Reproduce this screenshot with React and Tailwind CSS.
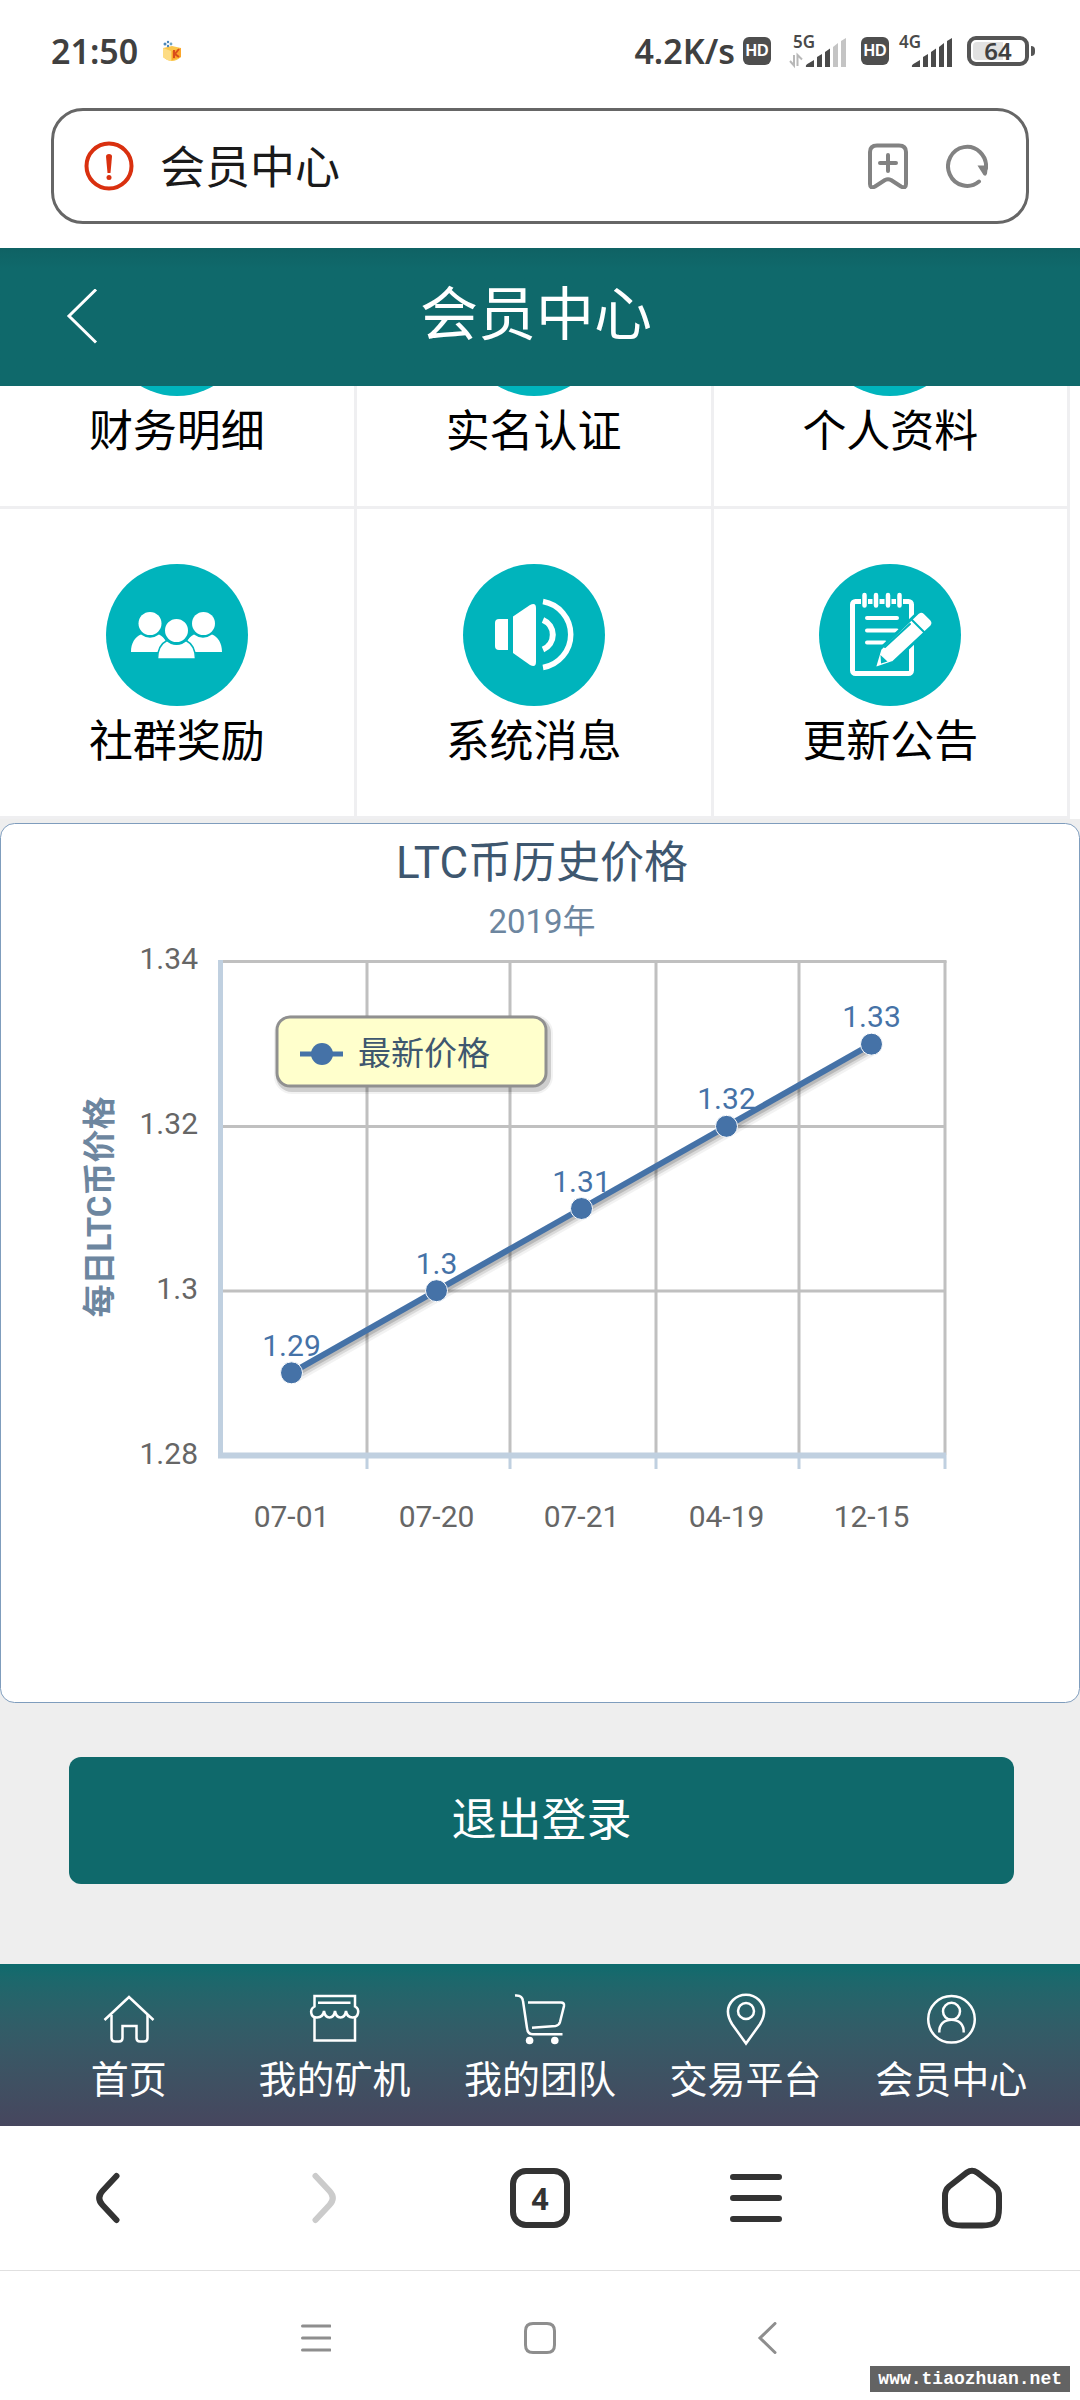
import React from "react";

const TEAL = "#00b4bc";

const prices = [
  { date: "07-01", value: 1.29 },
  { date: "07-20", value: 1.3 },
  { date: "07-21", value: 1.31 },
  { date: "04-19", value: 1.32 },
  { date: "12-15", value: 1.33 },
];

// plot area inside the 1080x880 chart
const PLOT = { left: 219, right: 944, top: 139, bottom: 632 };

function pointX(i) {
  return PLOT.left + ((PLOT.right - PLOT.left) / prices.length) * (i + 0.5);
}

function pointY(value) {
  return PLOT.bottom - ((value - 1.28) / 0.06) * (PLOT.bottom - PLOT.top);
}

function PeopleIcon() {
  return (
    <svg viewBox="0 0 142 142" className="size-full" fill="#fff">
      <path d="M25 88C25 79 29 73 35 70.5Q44 77 53 70.5C59 73 62 80 63 88Z" />
      <path d="M116 88C116 79 112 73 106 70.5Q97 77 88 70.5C82 73 79 80 78 88Z" />
      <path d="M51.500 95C51.500 85 56 79 61 76.500Q70.500 83 80 76.500C85 79 89.500 85 89.500 95Z" stroke={TEAL} strokeWidth="1.500" />
      <circle cx="44" cy="59.500" r="11.500" />
      <circle cx="97.500" cy="59.500" r="11.500" />
      <circle cx="70.500" cy="66.500" r="13" stroke={TEAL} strokeWidth="3" />
    </svg>
  );
}

function SpeakerIcon() {
  return (
    <svg viewBox="0 0 142 142" className="size-full" fill="#fff">
      <path d="M45 55V86H36Q32 86 32 82V59Q32 55 36 55Z" />
      <path d="M50 52.500L67 41Q73 38 73 44V98Q73 104 67 101L50 89Z" />
      <path d="M80 56A16 16 0 0 1 80 85.500" fill="none" stroke="#fff" strokeWidth="6" />
      <path d="M80 37.500A33.500 33.500 0 0 1 80 103.500" fill="none" stroke="#fff" strokeWidth="5.500" />
    </svg>
  );
}

function NotepadIcon() {
  return (
    <svg viewBox="0 0 142 142" className="size-full" fill="none" stroke="#fff" strokeLinecap="round">
      <rect x="33.500" y="37.500" width="59" height="72" rx="3" strokeWidth="5" />
      <path d="M45.500 34V41M57 34V41M69 34V41M80.500 34V41" stroke={TEAL} strokeWidth="7" />
      <path d="M45.500 31V41.500M57 31V41.500M69 31V41.500M80.500 31V41.500" strokeWidth="4.500" />
      <path d="M48 54H78M48 66.500H78M48 78.500H66" strokeWidth="4" />
      <path d="M55 105L61 85L99 48.500Q102.500 45.500 106 49L112.500 55.500Q115.500 59 112.500 62.500L74 98.500Z" fill="#fff" stroke={TEAL} strokeWidth="3" strokeLinejoin="round" />
      <path d="M93 56L106 69M66 83L91 60" stroke={TEAL} strokeWidth="2" />
      <path d="M61.500 91L68.500 97.500L62 99.500Z" fill={TEAL} stroke="none" />
    </svg>
  );
}

const menu = [
  { label: "财务明细" },
  { label: "实名认证" },
  { label: "个人资料" },
  { label: "社群奖励", icon: <PeopleIcon /> },
  { label: "系统消息", icon: <SpeakerIcon /> },
  { label: "更新公告", icon: <NotepadIcon /> },
];

const tabs = [
  {
    label: "首页",
    icon: (
      <>
        <path d="M1.500 26L26 3L50.500 26" />
        <path d="M8.500 21V44Q8.500 47.500 12 47.500H16Q19.500 47.500 19.500 44V32H33.500V44Q33.500 47.500 37 47.500H41Q44.500 47.500 44.500 44V21" />
      </>
    ),
  },
  {
    label: "我的矿机",
    icon: (
      <>
        <path d="M6.500 12.500V2H47V12.500C52 15 51 23.500 44.500 23.500Q39 23.500 38 17Q37 23.500 32.500 23.500Q28 23.500 27 17Q26 23.500 21.500 23.500Q17 23.500 16 17Q15 23.500 9 23.500C2 23.500 1.500 15 6.500 12.500Z" />
        <path d="M10 8.700H42.500M6.500 23V46.500H47V23" />
      </>
    ),
  },
  {
    label: "我的团队",
    icon: (
      <>
        <path d="M1 1.500C6 1 8.500 3 9 7L13 34Q13.500 40.300 19 40.300H48.500" />
        <path d="M14 8.500H47Q50.500 8.500 50 12L46 28Q45 31.500 41.500 32L18 33.800" />
        <circle cx="15.600" cy="46.500" r="3.800" fill="#fff" stroke="none" />
        <circle cx="40.800" cy="46.500" r="3.800" fill="#fff" stroke="none" />
      </>
    ),
  },
  {
    label: "交易平台",
    icon: (
      <>
        <path d="M26 49.500L12 30C6 20 7 12 13 6C20-1 32-1 39 6C45 12 46 20 40 30Z" />
        <circle cx="26" cy="17" r="8" />
      </>
    ),
  },
  {
    label: "会员中心",
    icon: (
      <>
        <circle cx="26.500" cy="25.300" r="23.300" />
        <circle cx="26.500" cy="17.300" r="8.500" />
        <path d="M14.300 38.500C14 30 19.500 25.800 26.500 25.800S39 30 38.700 38.500" />
      </>
    ),
  },
];

function HdBadge() {
  return (
    <span className="flex size-7 items-center justify-center rounded-md bg-[#4e4e4e] font-['Liberation_Sans'] text-base font-bold text-white">
      HD
    </span>
  );
}

function Signal({ label, weak }) {
  const off = weak ? "#c4c4c4" : "#4a4a4a";
  return (
    <svg viewBox="0 0 60 34" className="h-[34px] w-[60px] overflow-visible" fill="#4a4a4a">
      <text x={weak ? 4 : 0} y="14" fontSize="17" fontWeight="600" fontFamily="Noto Sans">
        {label}
      </text>
      {weak && <path d="M1 27L5 31.500V21M8.500 32V21L13 25.500" fill="none" stroke="#b8b8b8" strokeWidth="2" />}
      <g transform={weak ? "translate(17 0)" : "translate(13 0)"}>
        <path d="M0 33Q-1 31 3 29L8 26V33Z" />
        <path d="M11 23L16 20V33H11Z" />
        <path d="M19 18L24 14.500V33H19Z" />
        <path d="M27 13L32 9V33H27Z" fill={off} />
        <path d="M35 7L40 4V33H35Z" fill={off} />
      </g>
    </svg>
  );
}

function StatusBar() {
  return (
    <div className="flex h-[102px] items-center justify-between pr-[45px] pl-[51px] font-['Noto_Sans'] text-[34px] font-semibold text-[#404040]">
      <div className="flex items-center gap-6">
        <span>21:50</span>
        <svg viewBox="0 0 20 22" className="h-[22px] w-5">
          <path d="M1 8L10 6L19 8V17Q10 25 1 17Z" fill="#fbc64c" />
          <path d="M1 8L9 11V21Q4 20 1 17Z" fill="#fddc84" />
          <path d="M10 11L19 8V17L10 20Z" fill="#fba62c" />
          <path d="M12 10V18M17 9L13 14L17 17" fill="none" stroke="#d94e1b" strokeWidth="2" />
          <circle cx="3" cy="4" r="1.500" fill="#4a86b8" />
          <circle cx="6" cy="2" r="1.200" fill="#4a86b8" />
          <circle cx="9" cy="4" r="1.400" fill="#72a4c4" />
          <circle cx="6" cy="6" r="1.200" fill="#4a86b8" />
        </svg>
      </div>
      <div className="flex items-center">
        <span className="mr-2">4.2K/s</span>
        <HdBadge />
        <span className="mr-3 ml-[18px]">
          <Signal label="5G" weak />
        </span>
        <HdBadge />
        <span className="mr-2 ml-[10px]">
          <Signal label="4G" />
        </span>
        <span className="flex h-[30px] w-[62px] rounded-[9px] border-4 border-[#555] p-0.5">
          <span className="flex flex-1 items-center justify-center rounded-sm bg-linear-to-r from-[#e2e2e2] from-60% to-white to-60% text-2xl leading-none">
            64
          </span>
        </span>
        <span className="ml-0.5 h-[10px] w-1 rounded-r bg-[#555]" />
      </div>
    </div>
  );
}

function AddressBar() {
  return (
    <div className="mx-[51px] mt-1.5 mb-6 flex h-[116px] items-center rounded-[32px] border-3 border-[#666] pr-[38px] pl-[30px]">
      <svg viewBox="0 0 50 50" className="size-[50px]" fill="none">
        <circle cx="25" cy="25" r="22.500" stroke="#d9300f" strokeWidth="4" />
        <path d="M22 15.500Q22 13 25 13T28 15.500L26.500 32H23.500Z" fill="#d9300f" />
        <circle cx="25" cy="36.500" r="2.500" fill="#d9300f" />
      </svg>
      <span className="ml-[26px] flex-1 pb-0.5 text-[45px] leading-[60px] text-[#1a1a1a]">会员中心</span>
      <button aria-label="收藏" className="mr-[38px]">
        <svg viewBox="0 0 40 46" className="h-[46px] w-10" fill="none" stroke="#828282" strokeWidth="4" strokeLinecap="round" strokeLinejoin="round">
          <path d="M2 9Q2 2.500 9 2.500H31Q38 2.500 38 9V41Q38 46 33 43.500L23 37Q20 35.500 17 37L7 43.500Q2 46 2 41Z" />
          <path d="M20 12V28M12 20H28" />
        </svg>
      </button>
      <button aria-label="刷新">
        <svg viewBox="0 0 42 44" className="h-11 w-[42px]" fill="none" stroke="#828282" strokeWidth="4">
          <path d="M33 37.500A19 19.500 0 1 1 40 24" strokeLinecap="round" />
          <path d="M31.500 21.500H42L41 29.500Q40 33 37.500 31Z" fill="#828282" stroke="none" />
        </svg>
      </button>
    </div>
  );
}

function PriceChart() {
  const line = prices.map((p, i) => `${pointX(i)},${pointY(p.value)}`).join(" ");
  return (
    <svg
      viewBox="0 0 1080 880"
      className="mt-1 block w-full font-[Roboto,'Noto_Sans_CJK_SC',sans-serif]"
      role="img"
      aria-label="LTC币历史价格"
    >
      <rect x=".5" y=".5" width="1079" height="879" rx="14" fill="#fff" stroke="#7f9dbd" />
      <text x="542" y="55" fontSize="44" fill="#3E576F" textAnchor="middle">LTC币历史价格</text>
      <text x="542" y="110" fontSize="33" fill="#6D869F" textAnchor="middle">2019年</text>

      {/* rejilla */}
      <g stroke="#c0c0c0" strokeWidth="3" fill="none">
        <path d="M220 138.500H946.500M220 303.500H946M220 468H946" />
        <path d="M367 138V632M510 138V632M656 138V632M799 138V632M945 138V632" />
      </g>
      <path d="M367 632V646M510 632V646M656 632V646M799 632V646M945 632V646" stroke="#c0d0e0" strokeWidth="3" />
      <path d="M220.500 137V635" stroke="#c0d0e0" strokeWidth="5" />
      <path d="M218 632.500H946" stroke="#c0d0e0" strokeWidth="6" />

      <g fontSize="30" fill="#666" textAnchor="end">
        <text x="198" y="146">1.34</text>
        <text x="198" y="311">1.32</text>
        <text x="198" y="476">1.3</text>
        <text x="198" y="641">1.28</text>
      </g>
      <g fontSize="30" fill="#666" textAnchor="middle">
        {prices.map((p, i) => (
          <text key={p.date} x={pointX(i)} y="704">{p.date}</text>
        ))}
      </g>
      <text transform="translate(111 384) rotate(-90)" fontSize="33" fontWeight="bold" fill="#6D869F" textAnchor="middle">
        每日LTC币价格
      </text>

      {/* serie */}
      <g fill="none" stroke="#000" strokeLinejoin="round" transform="translate(3 3)">
        <polyline points={line} strokeOpacity=".05" strokeWidth="14" />
        <polyline points={line} strokeOpacity=".1" strokeWidth="9" />
        <polyline points={line} strokeOpacity=".15" strokeWidth="4" />
      </g>
      <polyline points={line} fill="none" stroke="#4572A7" strokeWidth="6" />
      {prices.map((p, i) => (
        <g key={p.date}>
          <circle cx={pointX(i)} cy={pointY(p.value)} r="11" fill="#4572A7" stroke="#fff" />
          <text x={pointX(i)} y={pointY(p.value) - 17} fontSize="30" fill="#4572A7" textAnchor="middle">
            {p.value}
          </text>
        </g>
      ))}

      {/* leyenda */}
      <g fill="none" stroke="#000" transform="translate(2 3)">
        <rect x="277" y="194" width="269" height="69" rx="13" strokeOpacity=".05" strokeWidth="10" />
        <rect x="277" y="194" width="269" height="69" rx="13" strokeOpacity=".15" strokeWidth="6" />
      </g>
      <rect x="277" y="194" width="269" height="69" rx="13" fill="#ffffcc" stroke="#909090" strokeWidth="3" />
      <path d="M300 231H343" stroke="#4572A7" strokeWidth="5" />
      <circle cx="322" cy="231" r="11" fill="#4572A7" />
      <text x="358" y="242" fontSize="33" fill="#3E576F">最新价格</text>
    </svg>
  );
}

function BrowserBar() {
  return (
    <nav className="grid h-36 grid-cols-5 items-center justify-items-center bg-white text-[#333]">
      <button aria-label="后退">
        <svg viewBox="0 0 24 52" className="h-[52px] w-6" fill="none" stroke="currentColor" strokeWidth="6" strokeLinecap="round">
          <path d="M20.500 4L6.500 19Q0 26 6.500 33L20.500 48" />
        </svg>
      </button>
      <button aria-label="前进" className="text-[#cbcbcb]">
        <svg viewBox="0 0 24 52" className="h-[52px] w-6" fill="none" stroke="currentColor" strokeWidth="6" strokeLinecap="round">
          <path d="M3.500 4L17.500 19Q24 26 17.500 33L3.500 48" />
        </svg>
      </button>
      <button className="flex size-[60px] items-center justify-center rounded-2xl border-6 border-[#333] font-['Noto_Sans'] text-[30px] font-bold">
        4
      </button>
      <button aria-label="菜单">
        <svg viewBox="0 0 52 50" className="h-[50px] w-[52px]" stroke="currentColor" strokeWidth="6" strokeLinecap="round">
          <path d="M3 4H49M3 25H49M3 46H49" />
        </svg>
      </button>
      <button aria-label="主页">
        <svg viewBox="0 0 60 62" className="h-[62px] w-[60px]" fill="none" stroke="currentColor" strokeWidth="6">
          <path d="M25 5.500Q30 2 35 5.500L53 19.500Q57 23 57 29V41C57 55 53 58.500 40 58.500H20C7 58.500 3 55 3 41V29Q3 23 7 19.500Z" />
        </svg>
      </button>
    </nav>
  );
}

function SystemBar() {
  return (
    <nav className="relative flex flex-1 items-center justify-center border-t border-[#e0e0e0] bg-white pt-[51px] pb-[46px] text-[#8e8e8e]">
      <button aria-label="最近任务" className="flex w-[225px] justify-center">
        <svg viewBox="0 0 32 32" className="size-8" stroke="currentColor" strokeWidth="3" strokeLinecap="round">
          <path d="M3.500 4H31M3.500 16H31M3.500 28H31" />
        </svg>
      </button>
      <button aria-label="桌面" className="flex w-[225px] justify-center">
        <svg viewBox="0 0 32 32" className="size-8" fill="none" stroke="currentColor" strokeWidth="3">
          <path d="M1.500 9Q1.500 1.500 9 1.500H23Q30.500 1.500 30.500 9V23Q30.500 30.500 23 30.500H9Q1.500 30.500 1.500 23Z" />
        </svg>
      </button>
      <button aria-label="返回" className="flex w-[225px] justify-center">
        <svg viewBox="0 0 32 32" className="size-8" fill="none" stroke="currentColor" strokeWidth="3" strokeLinecap="round">
          <path d="M26 1.500L11 16L26 30.500" />
        </svg>
      </button>
      <span className="absolute right-[10px] bottom-2 bg-[#636363] px-2 font-['Liberation_Mono'] text-lg leading-[26px] font-bold text-white">
        www.tiaozhuan.net
      </span>
    </nav>
  );
}

export default function App() {
  return (
    <div className="flex min-h-screen flex-col bg-[#eeeeee] font-['Noto_Sans_CJK_SC',sans-serif]">
      <div className="bg-white">
        <StatusBar />
        <AddressBar />
      </div>

      <header className="flex h-[138px] items-center bg-linear-to-b from-[#0f6264] to-[#0f696b] to-15% px-[66px] text-white">
        <button aria-label="返回">
          <svg viewBox="0 0 32 56" className="h-14 w-8" fill="none" stroke="currentColor" strokeWidth="3">
            <path d="M30 .5L3 27L30 53.500" />
          </svg>
        </button>
        <h1 className="flex-1 pr-10 pb-3.5 text-center text-[58px] leading-[80px]">会员中心</h1>
      </header>

      <main>
        {/* la primera fila queda recortada por la cabecera */}
        <div className="overflow-hidden bg-white">
          <div className="-mt-[187px] grid w-[99.1%] grid-cols-3">
            {menu.map((item) => (
              <a
                key={item.label}
                href="#"
                className="flex h-[310px] flex-col items-center border-r-3 border-b-3 border-[#efeff1] pt-[55px] text-[44px] leading-[60px] text-black"
              >
                <span className="size-[142px] rounded-full bg-[#00b4bc]">{item.icon}</span>
                <span className="mt-0.5">{item.label}</span>
              </a>
            ))}
          </div>
        </div>
        <PriceChart />
        <div className="pt-[54px] pr-[66px] pb-20 pl-[69px]">
          <button className="h-[127px] w-full rounded-xl bg-[#0f696b] pb-2 text-[45px] text-white">退出登录</button>
        </div>
      </main>

      <nav className="grid grid-cols-5 bg-linear-to-b from-[#0d6b6d] to-[#46465e] px-[26px] pt-[30px] pb-[27px] text-white">
        {tabs.map((tab) => (
          <a key={tab.label} href="#" className="flex flex-col items-center gap-[9px] text-[38px] leading-[44px] whitespace-nowrap">
            <svg viewBox="0 0 52 52" className="size-[52px] overflow-visible" fill="none" stroke="#fff" strokeWidth="2.500">
              {tab.icon}
            </svg>
            {tab.label}
          </a>
        ))}
      </nav>

      <BrowserBar />
      <SystemBar />
    </div>
  );
}
